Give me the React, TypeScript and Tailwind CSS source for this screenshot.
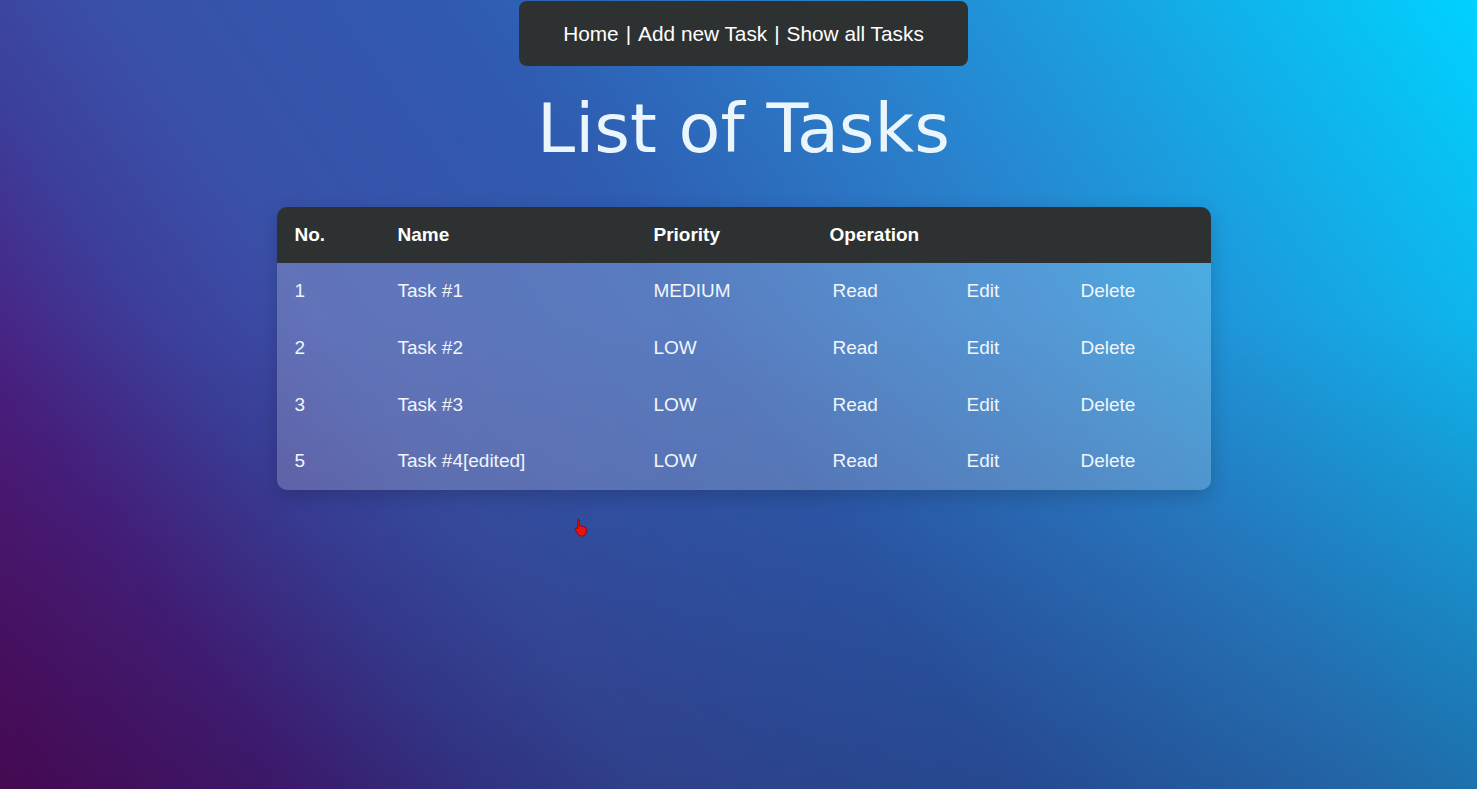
import React from 'react';

type Task = { no: number; name: string; priority: string };

const TASKS: Task[] = [
  { no: 1, name: 'Task #1', priority: 'MEDIUM' },
  { no: 2, name: 'Task #2', priority: 'LOW' },
  { no: 3, name: 'Task #3', priority: 'LOW' },
  { no: 5, name: 'Task #4[edited]', priority: 'LOW' },
];

const COLS = 'grid grid-cols-[103px_256px_176px_137px_114px_1fr]';

export default function App() {
  return (
    <div className="relative min-h-screen w-full overflow-hidden bg-[linear-gradient(55deg,#560b60_0%,#4a1f80_14%,#3c3f9c_24%,#3a50a8_32%,#2f5bb0_50%,#2a80cc_68%,#00d2ff_100%)] font-['Liberation_Sans',Arial,sans-serif]">
      {/* darker wash toward the bottom */}
      <div className="pointer-events-none absolute inset-0 bg-[linear-gradient(to_bottom,rgba(0,0,20,0)_40%,rgba(0,0,20,0.2)_100%)]" />

      <div className="relative flex flex-col items-center pl-[10px]">
        {/* Nav */}
        <nav className="mt-px flex h-[65px] w-[449px] items-center justify-center rounded-lg bg-[#2d3132] text-[20.8px] text-white">
          <a className="cursor-pointer">Home</a>
          <span className="mx-[7px]">|</span>
          <a className="cursor-pointer">Add new Task</a>
          <span className="mx-[7px]">|</span>
          <a className="cursor-pointer">Show all Tasks</a>
        </nav>

        <h1 className="mt-[22px] font-['DejaVu_Sans',Verdana,sans-serif] text-[68.5px] leading-[80px] text-[#eaf6fb]">
          List of Tasks
        </h1>

        {/* Table */}
        <div className="mt-[39px] w-[934px] overflow-hidden rounded-[10px] shadow-[0_6px_20px_rgba(0,0,0,0.18)]">
          <div className={`${COLS} h-[56px] items-center bg-[#2d3132] text-[19px] font-bold text-white`}>
            <div className="pl-[18px]">No.</div>
            <div className="pl-[18px]">Name</div>
            <div className="pl-[18px]">Priority</div>
            <div className="col-span-3 pl-[18px]">Operation</div>
          </div>
          <div className="bg-white/20">
            {TASKS.map((t) => (
              <div key={t.no} className={`${COLS} h-[56.75px] items-center text-[19px] text-[#f0f6fb]`}>
                <div className="pl-[18px]">{t.no}</div>
                <div className="pl-[18px]">{t.name}</div>
                <div className="pl-[18px]">{t.priority}</div>
                <div className="pl-[21px]"><a className="cursor-pointer">Read</a></div>
                <div className="pl-[18px]"><a className="cursor-pointer">Edit</a></div>
                <div className="pl-[18px]"><a className="cursor-pointer">Delete</a></div>
              </div>
            ))}
          </div>
        </div>
      </div>

      {/* mouse pointer in the screenshot */}
      <svg className="absolute left-[574px] top-[518px]" width="16" height="20" viewBox="0 0 16 20">
        <path
          d="M4 1.5c.8 0 1.3.6 1.3 1.4v5.2c.3-.4.8-.6 1.3-.5.6.1 1 .5 1.1 1 .3-.3.8-.5 1.3-.4.6.1 1 .6 1.1 1.1.3-.2.7-.3 1.1-.2.7.2 1.1.8 1.1 1.5v3.2c0 2.4-1.9 4.2-4.3 4.2H7.4c-1.4 0-2.6-.7-3.4-1.8L1.3 11.6c-.4-.6-.2-1.3.4-1.6.5-.3 1.2-.2 1.5.3l.5.8V2.9c0-.8.5-1.4 1.3-1.4z"
          fill="#e8140c"
          stroke="#8a0000"
          strokeWidth="0.8"
        />
      </svg>
    </div>
  );
}
